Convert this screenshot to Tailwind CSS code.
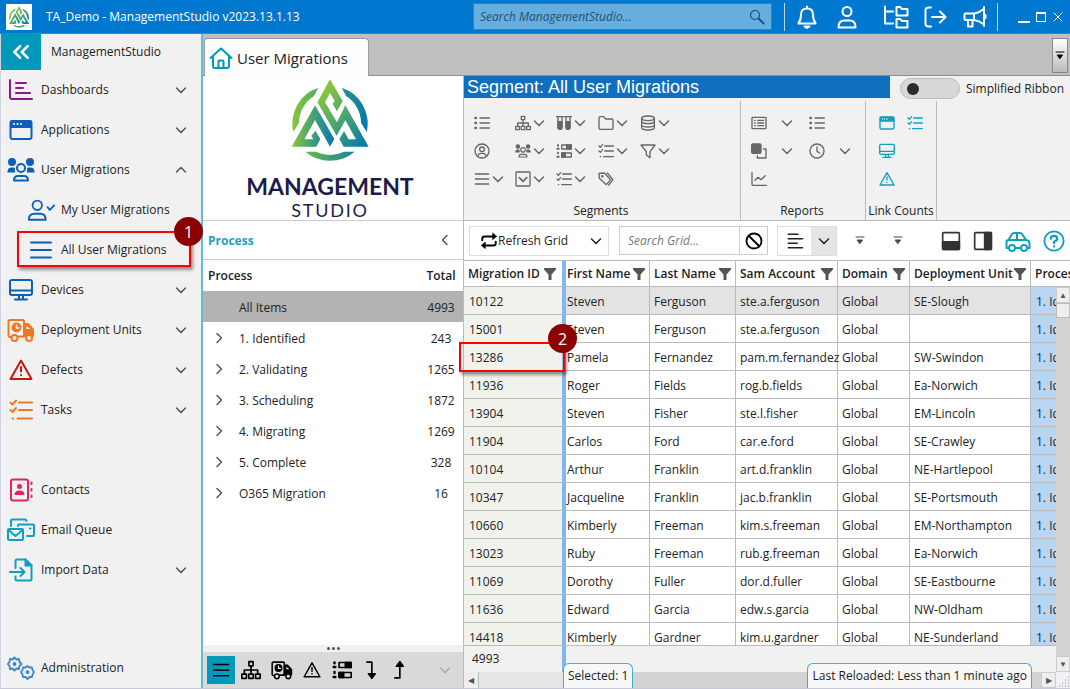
<!DOCTYPE html>
<html lang="en">
<head>
  <meta charset="UTF-8">
  <meta name="viewport" content="width=device-width, initial-scale=1.0">
  <title>TA_Demo - ManagementStudio</title>
  <script src="https://cdn.jsdelivr.net/npm/@tailwindcss/browser@4"></script>
</head>
<body class="flex h-screen flex-col overflow-hidden bg-[#f1f1f1] font-['Open_Sans','Noto_Sans',sans-serif] text-xs text-[#222] [&_svg]:fill-none [&_svg]:stroke-current [&_svg]:stroke-2 [&_svg]:[stroke-linecap:round] [&_svg]:[stroke-linejoin:round]">

  <!-- Icon sprite -->
  <svg class="absolute size-0" aria-hidden="true">
    <defs>
      <linearGradient id="grad-logo" gradientUnits="userSpaceOnUse" x1="280" y1="0" x2="500" y2="0">
        <stop offset="0" stop-color="#86c440"/><stop offset=".45" stop-color="#44a56c"/><stop offset="1" stop-color="#0779ae"/>
      </linearGradient>
      <linearGradient id="grad-left" gradientUnits="userSpaceOnUse" x1="280" y1="200" x2="400" y2="215">
        <stop offset="0" stop-color="#86c440"/><stop offset=".5" stop-color="#3f9c7c"/><stop offset="1" stop-color="#0779ae"/>
      </linearGradient>
      <linearGradient id="grad-right" gradientUnits="userSpaceOnUse" x1="360" y1="80" x2="500" y2="220">
        <stop offset="0" stop-color="#86c440"/><stop offset=".5" stop-color="#45a273"/><stop offset="1" stop-color="#0779ae"/>
      </linearGradient>
    </defs>
    <symbol id="logo" viewBox="270 25 240 250">
      <path stroke="none" fill="url(#grad-logo)" d="M355 53A113 113 0 0 0 280 186L297 158A95 95 0 0 1 342 78ZM425 53A113 113 0 0 1 500 186L483 158A95 95 0 0 0 438 78ZM316 245A113 113 0 0 0 464 245L432 245A95 95 0 0 1 348 245Z"/>
      <path stroke="none" fill="url(#grad-left)" d="M275 230L345 106L403 207L390 230L345 150L313 208H340L334 198L346 182L361 207L349 230Z"/>
      <path stroke="none" fill="url(#grad-right)" d="M390 28L428 93L411 124L398 102L404 92L390 69L375 97L411 157L436 106L506 230H431L418 207L432 183L446 208H468L436 151L410 197L352 97Z"/>
    </symbol>
    <symbol id="i-down" viewBox="0 0 12 12"><path d="M1.500 4L6 8.500L10.500 4" stroke-width="1.500"/></symbol>
    <symbol id="i-up" viewBox="0 0 12 12"><path d="M1.500 8L6 3.500L10.500 8" stroke-width="1.500"/></symbol>
    <symbol id="i-right" viewBox="0 0 12 12"><path d="M4 1.500L8.500 6L4 10.500" stroke-width="1.500"/></symbol>
    <symbol id="i-left" viewBox="0 0 12 12"><path d="M8 1.500L3.500 6L8 10.500" stroke-width="1.500"/></symbol>
    <symbol id="i-collapse" viewBox="0 0 24 24"><path d="M11 5L4 12L11 19M20 5L13 12L20 19" stroke-width="3"/></symbol>
    <symbol id="i-chart" viewBox="0 0 24 24"><path d="M1 2V19Q1 21 3 21H23M7 5H17M7 10H14M7 15H21"/></symbol>
    <symbol id="i-app" viewBox="0 0 24 24"><rect x="1.500" y="3" width="21" height="18" rx="2"/><path d="M2 3.500H22V9H2Z" fill="currentColor"/><path d="M5 6H5.100M8.500 6H8.600M12 6H12.100" stroke="#f1f1f1"/></symbol>
    <symbol id="i-users" viewBox="0 0 28 24"><circle cx="5" cy="4" r="3" fill="currentColor"/><circle cx="23" cy="4" r="3" fill="currentColor"/><circle cx="14" cy="10" r="4"/><path d="M1 13Q1 10 4 10H7.500Q7 13 8 14H1ZM27 13Q27 10 24 10H20.500Q21 13 20 14H27Z" fill="currentColor" stroke-width="1"/><path d="M7 22.500Q7 18 11 18H17Q21 18 21 22.500Z"/></symbol>
    <symbol id="i-usercheck" viewBox="0 0 30 24"><circle cx="11" cy="7" r="5"/><path d="M2 22.500Q2 16 8 16H14Q20 16 20 22.500ZM22 9L24.500 12L29 7"/></symbol>
    <symbol id="i-menu" viewBox="0 0 24 24"><path d="M2 4.500H22M2 12H22M2 19.500H22"/></symbol>
    <symbol id="i-monitor" viewBox="0 0 24 24"><rect x="1" y="2" width="22" height="15" rx="2"/><path d="M1 12.500H23M10 17V21M14 17V21M6 21.500H18"/></symbol>
    <symbol id="i-truck" viewBox="0 0 28 24"><path d="M4 19H3Q1.500 19 1.500 17.500V3.500Q1.500 2 3 2H15.500Q17 2 17 3.500V18.500H11"/><circle cx="9.500" cy="9.500" r="5" fill="currentColor" stroke="none"/><path d="M9.500 7V10H12" stroke="#f1f1f1" stroke-width="1.500"/><path d="M17 6H21L26 11.500V18H25Q22 13 18 18H17Z" fill="currentColor"/><path d="M19.500 8V11H23.500Z" fill="#f1f1f1" stroke="none"/><circle cx="7.500" cy="20" r="3" fill="#f1f1f1"/><circle cx="22" cy="20" r="3" fill="#f1f1f1"/></symbol>
    <symbol id="i-warn" viewBox="0 0 24 24"><path d="M12 2.500L22.500 21H1.500ZM12 9V13.500M12 17V17.200"/></symbol>
    <symbol id="i-tasks" viewBox="0 0 24 24"><path d="M1.500 4.500L3.500 6.500L7 2.500M1.500 12L3.500 14L7 10M3.500 20.500H4M10 4.500H23M10 12H23M8.500 20.500H23"/></symbol>
    <symbol id="i-contact" viewBox="0 0 24 24"><rect x="2" y="1.500" width="17" height="21" rx="2"/><circle cx="10.500" cy="8.500" r="2.500" fill="currentColor" stroke="none"/><path d="M5.500 17Q5.500 12.500 10.500 12.500T15.500 17Z" fill="currentColor" stroke="none"/><path d="M22.500 4.500V6M22.500 11V12.500M22.500 17.500V19"/></symbol>
    <symbol id="i-mails" viewBox="0 0 28 24"><rect x="1" y="11" width="15" height="11" rx="1"/><path d="M1.500 12L8.500 18L15.500 12M4 8V2.500Q4 1.500 5 1.500H18Q19.500 1.500 19.500 3M11 8V7.500Q11 6.500 12 6.500H26Q27 6.500 27 7.500V17Q27 18 26 18H20M23 10.500H23.500"/></symbol>
    <symbol id="i-import" viewBox="0 0 24 24"><path d="M6.500 10V3Q6.500 1.500 8 1.500H16.500L22.500 7.500V21Q22.500 22.500 21 22.500H8Q6.500 22.500 6.500 21V18.500M1 14H15M11.500 10L15.500 14L11.500 18"/><path d="M16.500 1.500V7.500H22.500Z" fill="currentColor"/></symbol>
    <symbol id="i-gears" viewBox="0 0 28 24"><g stroke-width="1.800"><path d="M7.500 1.500L9.500 3.500L12 3L12.500 6L14.500 8L12.500 10L12 13L9.500 12.500L7.500 14.500L5.500 12.500L3 13L2.500 10L.900 8L2.500 6L3 3L5.500 3.500Z"/><circle cx="7.500" cy="8" r="1"/><path d="M20.500 10L22.500 11.500L25 11.500L25.500 14L27 16L25.500 18.500L25 21L22.500 21L20.500 23L18.500 21L16 21L15.500 18.500L14 16L15.500 14L16 11.500L18.500 11.500Z"/><circle cx="20.500" cy="16.200" r="1"/></g></symbol>
    <symbol id="i-home" viewBox="0 0 24 24"><path d="M1.500 12L12 2.500L22.500 12M4 10.500V20Q4 22 6 22H18Q20 22 20 20V10.500M9.500 21V15.500Q9.500 14.500 10.500 14.500H13.500Q14.500 14.500 14.500 15.500V21"/></symbol>
    <symbol id="i-search" viewBox="0 0 16 16"><circle cx="6" cy="6" r="4.500" stroke-width="1.200"/><path d="M9.500 9.500L14.500 14.500" stroke-width="2"/></symbol>
    <symbol id="i-bell" viewBox="0 0 24 24"><path d="M12 1.500V3M3.500 18Q6 15 6 9.500Q6 3.500 12 3.500T18 9.500Q18 15 20.500 18V18.500H3.500Z"/><path d="M9.500 21.500H14.500L12 23Z" fill="currentColor"/></symbol>
    <symbol id="i-user" viewBox="0 0 24 24"><circle cx="12" cy="6.500" r="4.500"/><path d="M3.500 22.500Q3.500 15.500 9 15.500H15Q20.500 15.500 20.500 22.500Z"/></symbol>
    <symbol id="i-tree" viewBox="0 0 26 24"><path d="M2 1.500V18.500H10M2 6.500H10M13.500 2H17L19 4H24.500V10.500H13.500ZM13.500 14H17L19 16H24.500V22.500H13.500Z"/></symbol>
    <symbol id="i-logout" viewBox="0 0 24 24"><path d="M8 2.500H5.500Q2.500 2.500 2.500 5.500V18.500Q2.500 21.500 5.500 21.500H8M9 12H22M17 6.500L22.500 12L17 17.500"/></symbol>
    <symbol id="i-horn" viewBox="0 0 24 24"><path d="M2 8.500H11Q16 8 21 3.500V19.500Q16 15.500 11 15H2.500Q1.500 15 1.500 14V9.500ZM11 8.500V15M5 15V21.500H9.500V15M21 2V21M22.500 10V13"/></symbol>
    <symbol id="i-list" viewBox="0 0 24 24"><path d="M2 4.500H3M2 12H3M2 19.500H3" stroke-width="3.500"/><path d="M9 4.500H23M9 12H23M9 19.500H23"/></symbol>
    <symbol id="i-org" viewBox="0 0 24 24"><path d="M9.500 2H14.500V7H9.500ZM1 17H6.500V22H1ZM9.300 17H14.700V22H9.300ZM17.500 17H23V22H17.500ZM12 7V17M4 17V12H20V17"/></symbol>
    <symbol id="i-tubes" viewBox="0 0 24 24"><path d="M1 2.500H11M13 2.500H23M3 3V18.500Q3 21.500 6 21.500T9 18.500V3M15 3V18.500Q15 21.500 18 21.500T21 18.500V3"/><path d="M3 10H9V19Q8 21.500 6 21.500T3 19ZM15 10H21V19Q20 21.500 18 21.500T15 19Z" fill="currentColor"/></symbol>
    <symbol id="i-folder" viewBox="0 0 24 24"><path d="M1.500 4.500Q1.500 2.500 3.500 2.500H8.500L11.500 6H20.500Q22.500 6 22.500 8V19.500Q22.500 21.500 20.500 21.500H3.500Q1.500 21.500 1.500 19.500Z"/></symbol>
    <symbol id="i-db" viewBox="0 0 24 24"><ellipse cx="12" cy="5" rx="9.500" ry="3.500"/><path d="M2.500 5V19Q3 22.500 12 22.500T21.500 19V5M2.500 10Q4 13 12 13T21.500 10M2.500 15Q4 18 12 18T21.500 15"/></symbol>
    <symbol id="i-profile" viewBox="0 0 24 24"><circle cx="12" cy="12" r="10.500"/><circle cx="12" cy="9.500" r="3.500"/><path d="M6 19Q7 15.500 10 15.500H14Q17 15.500 18 19"/></symbol>
    <symbol id="i-rows" viewBox="0 0 24 24"><path d="M3 3V4M3 14.500V15.500M2 8.500H4M2 20.500H4" stroke-width="3"/><path d="M8.500 3H23V9H8.500ZM8.500 15H23V21H8.500Z"/><path d="M16 3H23V9H16ZM8.500 15H14V21H8.500Z" fill="currentColor"/></symbol>
    <symbol id="i-funnel" viewBox="0 0 24 24"><path d="M1.500 3H22.500L15 13V22L9.500 18V13Z"/></symbol>
    <symbol id="i-check" viewBox="0 0 24 24"><rect x="1.500" y="1.500" width="21" height="21" rx="1"/><path d="M6.500 10L12 15.500L17.500 10" stroke-width="2.500"/></symbol>
    <symbol id="i-tags" viewBox="0 0 24 24"><path d="M1.500 3.500L2 11L12.500 20.500L19 13L9.500 3ZM14 3L22.500 13L16 21"/><circle cx="6.500" cy="8" r="1"/></symbol>
    <symbol id="i-report" viewBox="0 0 24 24"><rect x="1.500" y="3.500" width="21" height="17" rx="1"/><path d="M5.500 8H6.500M5.500 12H6.500M5.500 16H6.500M10 8H19M10 12H19M10 16H19"/></symbol>
    <symbol id="i-copy" viewBox="0 0 24 24"><rect x="1" y="1.500" width="14" height="14" rx="2" fill="currentColor"/><path d="M19 9H22.500V22.500H9.500V19"/></symbol>
    <symbol id="i-clock" viewBox="0 0 24 24"><circle cx="12" cy="12" r="10.500"/><path d="M12 6V12.500L16 15"/></symbol>
    <symbol id="i-trend" viewBox="0 0 24 24"><path d="M1.500 2.500V20Q1.500 21.500 3 21.500H23M6 14L10.500 9.500L15 13L21.500 7"/></symbol>
    <symbol id="i-refresh" viewBox="0 0 24 24"><path d="M3 11V9Q3 6 6 6H19M5 18H18Q21 18 21 15V13" stroke-width="2.500"/><path d="M17 2V10L22 6ZM7 14V22L2 18Z" fill="currentColor" stroke-width="1"/></symbol>
    <symbol id="i-ban" viewBox="0 0 24 24"><circle cx="12" cy="12" r="10" stroke-width="2.500"/><path d="M5 5L19 19" stroke-width="2.500"/></symbol>
    <symbol id="i-align" viewBox="0 0 24 24"><path d="M3 3H16M3 9H22M3 15H15M3 21H22"/></symbol>
    <symbol id="i-pbottom" viewBox="0 0 24 24"><rect x="2" y="2" width="20" height="20" rx="1"/><path d="M2 13H22V22H2Z" fill="currentColor"/></symbol>
    <symbol id="i-pright" viewBox="0 0 24 24"><rect x="2" y="2" width="20" height="20" rx="1"/><path d="M14 2H22V22H14Z" fill="currentColor"/></symbol>
    <symbol id="i-car" viewBox="0 0 26 24"><path d="M4 19H1.500V13Q1.500 11 3.500 11L7 5Q7.500 4 9 4H15Q16 4 17 5L21 11Q24.500 11.500 24.500 14V19H22M10 19H16M3.500 11H21M12 4V11"/><circle cx="7" cy="19" r="3"/><circle cx="19" cy="19" r="3"/></symbol>
    <symbol id="i-help" viewBox="0 0 24 24"><circle cx="12" cy="12" r="10.500"/><path d="M8.500 9.500Q8.500 6.500 12 6.500T15.500 9.500Q15.500 11.500 12 13V14.500M12 18V18.100" stroke-width="2.500"/></symbol>
    <symbol id="i-enddown" viewBox="0 0 24 24"><path d="M7 2.500H13V19"/><path d="M9 16.500H17L13 22Z" fill="currentColor"/></symbol>
    <symbol id="i-endup" viewBox="0 0 24 24"><path d="M7 21.500H13V5"/><path d="M9 7.500H17L13 2Z" fill="currentColor"/></symbol>
    <symbol id="i-filter" viewBox="0 0 12 12"><path d="M0 0H12V1.500L7.500 6.500V12H4.500V6.500L0 1.500Z" fill="#555" stroke="none"/></symbol>
    <symbol id="i-overflow" viewBox="0 0 10 10"><path d="M1 1H9M2.500 4H7.500L5 7.500Z" fill="currentColor" stroke-width="1"/></symbol>
  </svg>

  <!-- Title bar -->
  <header class="flex h-[34px] shrink-0 items-center border-b border-[#1795c0] bg-[#0078d0] text-white">
    <span class="ml-1.5 bg-white"><svg class="size-[26px] p-0.5"><use href="#logo"/></svg></span>
    <h1 class="ml-3.5 flex-1">TA_Demo - ManagementStudio v2023.13.1.13</h1>
    <label class="flex h-[27px] w-[299px] items-center border border-[#2384cc] bg-[#66ade0] px-1.5 text-[#1f4e79]">
      <input type="text" aria-label="Search ManagementStudio" placeholder="Search ManagementStudio..." class="min-w-0 flex-1 italic outline-none placeholder:text-[#27506f]">
      <svg class="size-4"><use href="#i-search"/></svg>
    </label>
    <div class="ml-3 flex h-7 items-center border-x border-[#b5d8f2] pr-2.5 pl-2.5">
      <button aria-label="Notifications"><svg class="size-6"><use href="#i-bell"/></svg></button>
      <button aria-label="Account" class="ml-4"><svg class="size-6"><use href="#i-user"/></svg></button>
      <button aria-label="Folders" class="ml-6"><svg class="h-6 w-[26px]"><use href="#i-tree"/></svg></button>
      <button aria-label="Log out" class="ml-3.5"><svg class="size-6"><use href="#i-logout"/></svg></button>
      <button aria-label="Announcements" class="ml-4"><svg class="size-6"><use href="#i-horn"/></svg></button>
    </div>
    <div class="mr-1.5 ml-5 flex items-center gap-1.5">
      <button aria-label="Minimize" class="h-3 w-3 border-b-2 border-white"></button>
      <button aria-label="Maximize" class="size-2.5 border border-t-2 border-white"></button>
      <button aria-label="Close"><svg class="size-3" viewBox="0 0 12 12"><path d="M2 2L10 10M10 2L2 10" stroke-width="1"/></svg></button>
    </div>
  </header>

  <div class="flex min-h-0 flex-1 border-b border-[#c9c9dc]">

    <!-- Sidebar -->
    <nav class="flex w-[203px] shrink-0 flex-col border-r-2 border-l border-r-[#62bcd2] border-l-[#d0d2e2]">
      <div class="flex h-9 items-center">
        <button aria-label="Collapse menu" class="flex h-9 w-10 items-center justify-center bg-[#0099bc] text-white"><svg class="size-5"><use href="#i-collapse"/></svg></button>
        <span class="ml-2.5">ManagementStudio</span>
      </div>
      <ul id="menu"></ul>
      <ul id="menu-tools" class="mt-10"></ul>
      <ul id="menu-admin" class="mt-auto"></ul>
    </nav>

    <div class="flex min-w-0 flex-1 flex-col">

      <!-- Tabs -->
      <div class="flex h-[42px] shrink-0 items-end justify-between border-b border-[#8f8f8f] bg-[#bfbfbf]">
        <a href="#" class="-mb-px ml-px flex h-[38px] w-[165px] items-center rounded-t border border-b-0 border-[#999] bg-[#fdfdfd] pl-1 text-[15px]">
          <svg class="mr-1 size-6 text-[#0099bc]"><use href="#i-home"/></svg>User Migrations
        </a>
        <button aria-label="Tab list" class="mr-0.5 mb-0.5 flex h-[35px] w-4 items-center justify-center border border-[#888] bg-linear-to-b from-white to-[#bbb] text-black"><svg class="size-2.5"><use href="#i-overflow"/></svg></button>
      </div>

      <div class="flex min-h-0 flex-1">

        <!-- Process panel -->
        <section class="flex w-[260px] shrink-0 flex-col bg-white">
          <div class="flex h-[145px] shrink-0 flex-col items-center border-b border-[#ccc] pt-0.5 pr-1.5 font-['Lato',sans-serif] text-[#1c1c48]">
            <svg class="h-[84px] w-20"><use href="#logo"/></svg>
            <span class="mt-2.5 text-[23px] leading-7 font-bold">MANAGEMENT</span>
            <span class="text-lg leading-5 tracking-widest">STUDIO</span>
          </div>
          <div class="flex h-[39px] shrink-0 items-center justify-between border-b border-[#ccc] pr-3 pl-[5px]">
            <h2 class="pt-0.5 font-bold text-[#1ba1c0]">Process</h2>
            <button aria-label="Collapse panel" class="text-[#555]"><svg class="size-3"><use href="#i-left"/></svg></button>
          </div>
          <table class="w-full table-fixed">
            <colgroup><col class="w-9"><col><col class="w-11"></colgroup>
            <thead>
              <tr class="h-[31px] text-left">
                <th colspan="2" class="pl-[5px] font-semibold">Process</th>
                <th class="text-center font-semibold">Total</th>
              </tr>
            </thead>
            <tbody id="process-rows"></tbody>
          </table>
          <div class="mt-auto flex h-[7px] items-center justify-center gap-0.5 bg-[#f1f1f1]">
            <i class="size-[3px] rounded-full bg-[#555]"></i><i class="size-[3px] rounded-full bg-[#555]"></i><i class="size-[3px] rounded-full bg-[#555]"></i>
          </div>
          <div class="flex h-9 shrink-0 items-center bg-[#d9d9d9] pl-1 text-black">
            <button aria-label="Process" class="flex size-7 items-center justify-center bg-[#0099bc]"><svg class="size-[18px]"><use href="#i-menu"/></svg></button>
            <button aria-label="Structure" class="ml-1.5"><svg class="size-5"><use href="#i-org"/></svg></button>
            <button aria-label="Deployment Units" class="ml-2.5"><svg class="h-5 w-[22px]"><use href="#i-truck"/></svg></button>
            <button aria-label="Defects" class="ml-2.5"><svg class="size-[18px]"><use href="#i-warn"/></svg></button>
            <button aria-label="Forms" class="ml-2.5"><svg class="h-5 w-[22px]"><use href="#i-rows"/></svg></button>
            <button aria-label="Move down" class="ml-2"><svg class="size-5"><use href="#i-enddown"/></svg></button>
            <button aria-label="Move up" class="ml-2"><svg class="size-5"><use href="#i-endup"/></svg></button>
            <button aria-label="More" class="mr-3 ml-auto text-[#aaa]"><svg class="size-3"><use href="#i-down"/></svg></button>
          </div>
        </section>

        <!-- Grid -->
        <section class="flex min-w-0 flex-1 flex-col border-l border-[#bbb]">
          <div class="flex h-[145px] shrink-0 flex-col border-b border-[#bbb]">
            <div class="flex h-[25px] items-start">
              <h2 class="h-[22px] flex-1 bg-[#106ebe] pl-[3px] font-['Liberation_Sans',Arial,sans-serif] text-lg leading-[22px] text-white">Segment: All User Migrations</h2>
              <label class="ml-2.5 flex items-center pt-0.5 pr-1.5">
                <input type="checkbox" class="peer sr-only">
                <span class="mr-1.5 flex h-[21px] w-[60px] items-center rounded-full border border-[#bbb] bg-[#d8d8d8] pl-1.5"><i class="size-3 rounded-full bg-[#2b2b2b]"></i></span>
                Simplified Ribbon
              </label>
            </div>
            <div class="flex flex-1 text-[#666]">
              <div class="flex w-[277px] flex-col border-r border-[#bbb] pt-2 pl-2.5">
                <div id="segments" class="grid auto-rows-[28px] grid-cols-[41px_41px_42px_42px_42px] items-center"></div>
                <p class="mt-auto pr-3 pb-px text-center text-[#222]">Segments</p>
              </div>
              <div class="flex w-[125px] flex-col border-r border-[#bbb] pt-2 pl-2.5">
                <div id="reports" class="grid auto-rows-[28px] grid-cols-[58px_58px] items-center"></div>
                <p class="mt-auto pr-3 pb-px text-center text-[#222]">Reports</p>
              </div>
              <div class="flex w-[71px] flex-col border-r border-[#bbb] pt-2">
                <div id="links" class="grid auto-rows-[28px] grid-cols-[28px_28px] items-center pl-[13px] text-[#0fa0c0]"></div>
                <p class="mt-auto pb-px text-center whitespace-nowrap text-[#222]">Link Counts</p>
              </div>
            </div>
          </div>

          <div class="flex h-10 shrink-0 items-center border-b border-[#bbb] bg-white px-[5px]">
            <button class="flex h-[30px] w-[140px] items-center border border-[#ddd] pr-1.5 pl-2.5"><svg class="size-[18px] text-black"><use href="#i-refresh"/></svg>Refresh Grid<svg class="ml-auto size-3"><use href="#i-down"/></svg></button>
            <div class="ml-2.5 flex h-[29px] w-[149px] border border-[#ccc]">
              <input type="text" aria-label="Search Grid" placeholder="Search Grid..." class="min-w-0 flex-1 pl-2 italic outline-none placeholder:text-[#777]">
              <button aria-label="Clear search" class="flex w-7 items-center justify-center border-l border-[#ccc] text-black"><svg class="size-[18px]"><use href="#i-ban"/></svg></button>
            </div>
            <div class="ml-[9px] flex h-[30px] w-[60px] border border-[#ddd]">
              <button aria-label="Align" class="flex flex-1 items-center justify-center"><svg class="size-[18px]"><use href="#i-align"/></svg></button>
              <button aria-label="Align options" class="flex w-[25px] items-center justify-center bg-[#e5e5e5]"><svg class="size-3"><use href="#i-down"/></svg></button>
            </div>
            <button aria-label="Toolbar options" class="ml-[18px] text-[#444]"><svg class="size-2.5"><use href="#i-overflow"/></svg></button>
            <button aria-label="Toolbar options" class="ml-7 text-[#444]"><svg class="size-2.5"><use href="#i-overflow"/></svg></button>
            <div class="ml-auto flex items-center gap-3 text-[#333]">
              <button aria-label="Bottom panel"><svg class="size-5"><use href="#i-pbottom"/></svg></button>
              <button aria-label="Right panel"><svg class="size-5"><use href="#i-pright"/></svg></button>
              <button aria-label="Ride along" class="text-[#0fa0c0]"><svg class="h-6 w-[26px]"><use href="#i-car"/></svg></button>
              <button aria-label="Help" class="text-[#0fa0c0]"><svg class="size-[22px]"><use href="#i-help"/></svg></button>
            </div>
          </div>

          <div class="relative flex min-h-0 flex-1 flex-col">
            <div class="min-h-0 flex-1 overflow-hidden border-b border-[#bbb]">
              <table class="w-[660px] min-w-full table-fixed border-separate border-spacing-0">
                <colgroup>
                  <col class="w-[102px]"><col class="w-[84px]"><col class="w-[86px]"><col class="w-[102px]"><col class="w-[72px]"><col class="w-[121px]"><col>
                </colgroup>
                <thead><tr id="grid-head" class="h-[26px] bg-white text-left"></tr></thead>
                <tbody id="grid-rows"></tbody>
              </table>
            </div>
            <div class="flex h-[26px] shrink-0"><div class="flex w-[102px] items-center border-r-4 border-[#7fb8ee] pl-2">4993</div></div>
            <div class="flex h-4 shrink-0 bg-[#d3d3d3]">
              <button aria-label="Scroll left" class="w-[15px] border-r border-[#bbb] bg-[#eee] text-[8px] leading-4 text-[#555]">◀</button>
              <div class="w-[154px] bg-[#e5e5e5]"></div>
              <button aria-label="Scroll right" class="ml-auto w-[15px] border border-[#ccc] bg-[#eee] text-[8px] text-[#555]">▶</button>
              <svg class="h-4 w-[14px] bg-[#f1f1f1]" viewBox="0 0 14 16"><path d="M12 5H13M9 8H10M12 8H13M6 11H7M9 11H10M12 11H13M3 14H4M6 14H7M9 14H10M12 14H13" stroke="#b9bfd0" stroke-linecap="butt"/></svg>
            </div>

            <!-- Vertical scrollbar -->
            <div class="absolute top-[26px] right-0 bottom-4 flex w-[14px] flex-col bg-[#d3d3d3]">
              <button aria-label="Scroll up" class="h-4 w-full border border-[#ccc] bg-[#eee] text-[8px] leading-3 text-[#555]">▲</button>
              <div class="h-[15px] border border-[#bbb] bg-[#eee]"></div>
              <button aria-label="Scroll down" class="mt-auto h-4 w-full border border-[#ccc] bg-[#eee] text-[8px] leading-3 text-[#555]">▼</button>
            </div>

            <!-- Status flyouts -->
            <p class="absolute bottom-0 left-[99px] h-[25px] rounded-t-md border border-b-0 border-[#45aec9] bg-[#f8f8f8] px-1 leading-6">Selected: 1</p>
            <p class="absolute right-[38px] bottom-0 h-[25px] rounded-t-md border border-b-0 border-[#45aec9] bg-[#f8f8f8] px-1 leading-6">Last Reloaded: Less than 1 minute ago</p>

            <!-- Step 2 marker -->
            <div class="absolute top-[81px] left-[-5px] h-[30px] w-[106px] border-2 border-[#f00] shadow-[2px_3px_3px_rgba(0,0,0,0.4)]">
              <span class="absolute -top-5 -right-3.5 flex size-[29px] items-center justify-center rounded-full bg-[#8b0000] text-base text-white">2</span>
            </div>
          </div>
        </section>
      </div>
    </div>
  </div>

  <script>
    const menu = [
      ["i-chart", "text-[#8a1a8c]", "Dashboards", "i-down"],
      ["i-app", "text-[#0f5fb8]", "Applications", "i-down"],
      ["i-users", "text-[#0f5fb8]", "User Migrations", "i-up"],
      ["i-usercheck", "text-[#0f5fb8]", "My User Migrations", "", "sub"],
      ["i-menu", "text-[#0f5fb8]", "All User Migrations", "", "sub", "1"],
      ["i-monitor", "text-[#0f5fb8]", "Devices", "i-down"],
      ["i-truck", "text-[#f07820]", "Deployment Units", "i-down"],
      ["i-warn", "text-[#c81414]", "Defects", "i-down"],
      ["i-tasks", "text-[#f07820]", "Tasks", "i-down"]
    ];
    const tools = [
      ["i-contact", "text-[#e0245e]", "Contacts"],
      ["i-mails", "text-[#0fa0c0]", "Email Queue"],
      ["i-import", "text-[#0fa0c0]", "Import Data", "i-down"]
    ];
    const admin = [["i-gears", "text-[#3c87cc]", "Administration"]];

    const marker = n => `
      <span class="absolute top-px right-2.5 left-4 h-9 border-2 border-[#f00] shadow-[2px_3px_3px_rgba(0,0,0,0.4)]">
        <span class="absolute -top-4 -right-3.5 z-10 flex size-[29px] items-center justify-center rounded-full bg-[#8b0000] text-base text-white">${n}</span>
      </span>`;

    const menuItem = ([icon, color, text, arrow, sub, mark]) => `
      <li class="relative">
        <a href="#" class="flex h-10 items-center pr-3.5 ${sub ? "pl-[26px]" : "pl-1.5"}">
          <svg class="mr-1.5 h-6 w-7 ${color}"><use href="#${icon}"/></svg>${text}
          ${arrow ? `<svg class="ml-auto size-3 text-[#555]"><use href="#${arrow}"/></svg>` : ""}
        </a>
        ${mark ? marker(mark) : ""}
      </li>`;

    document.getElementById("menu").innerHTML = menu.map(menuItem).join("");
    document.getElementById("menu-tools").innerHTML = tools.map(menuItem).join("");
    document.getElementById("menu-admin").innerHTML = admin.map(menuItem).join("");

    const process = [
      ["All Items", 4993], ["1. Identified", 243], ["2. Validating", 1265], ["3. Scheduling", 1872],
      ["4. Migrating", 1269], ["5. Complete", 328], ["O365 Migration", 16]
    ];
    document.getElementById("process-rows").innerHTML = process.map(([name, total], i) => `
      <tr class="h-[31px] ${i ? "" : "bg-[#b3b3b3]"}">
        <td class="pl-2.5 text-[#555]">${i ? `<svg class="size-3"><use href="#i-right"/></svg>` : ""}</td>
        <td class="pt-0.5">${name}</td>
        <td class="pt-0.5 text-center">${total}</td>
      </tr>`).join("");

    // Ribbon buttons: [icon, label, has drop-down]
    const ribbon = (id, gap, items) => {
      document.getElementById(id).innerHTML = items.map(item => item ? `
        <button aria-label="${item[1]}" class="flex items-center ${gap}">
          <svg class="size-4"><use href="#${item[0]}"/></svg>
          ${item[2] ? `<svg class="size-3"><use href="#i-down"/></svg>` : ""}
        </button>` : "<span></span>").join("");
    };
    ribbon("segments", "gap-0.5", [
      ["i-list", "List"], ["i-org", "Structure", 1], ["i-tubes", "Tests", 1], ["i-folder", "Folders", 1], ["i-db", "Data", 1],
      ["i-profile", "Profile"], ["i-users", "Users", 1], ["i-rows", "Forms", 1], ["i-tasks", "Tasks", 1], ["i-funnel", "Filter", 1],
      ["i-menu", "Rows", 1], ["i-check", "Select", 1], ["i-tasks", "Checklist", 1], ["i-tags", "Tags"]
    ]);
    ribbon("reports", "gap-3.5", [
      ["i-report", "Report", 1], ["i-list", "List"],
      ["i-copy", "Copy", 1], ["i-clock", "History", 1],
      ["i-trend", "Trend"]
    ]);
    ribbon("links", "gap-0", [
      ["i-app", "Applications"], ["i-tasks", "Tasks"], ["i-monitor", "Devices"], null, ["i-warn", "Defects"]
    ]);

    const columns = ["Migration ID", "First Name", "Last Name", "Sam Account", "Domain", "Deployment Unit", "Process"];
    document.getElementById("grid-head").innerHTML = columns.map((name, i) => `
      <th class="border-b border-[#bbb] py-0 font-semibold whitespace-nowrap ${i ? "border-r pr-1" : "border-r-4 border-r-[#7fb8ee] pr-1.5"} ${i === 1 ? "pl-px" : "pl-1"}">
        <span class="flex items-center justify-between">${name}<svg class="size-3"><use href="#i-filter"/></svg></span>
      </th>`).join("");

    const people = [
      [10122, "Steven", "Ferguson", "ste.a.ferguson", "SE-Slough"],
      [15001, "Steven", "Ferguson", "ste.a.ferguson", ""],
      [13286, "Pamela", "Fernandez", "pam.m.fernandez", "SW-Swindon"],
      [11936, "Roger", "Fields", "rog.b.fields", "Ea-Norwich"],
      [13904, "Steven", "Fisher", "ste.l.fisher", "EM-Lincoln"],
      [11904, "Carlos", "Ford", "car.e.ford", "SE-Crawley"],
      [10104, "Arthur", "Franklin", "art.d.franklin", "NE-Hartlepool"],
      [10347, "Jacqueline", "Franklin", "jac.b.franklin", "SE-Portsmouth"],
      [10660, "Kimberly", "Freeman", "kim.s.freeman", "EM-Northampton"],
      [13023, "Ruby", "Freeman", "rub.g.freeman", "Ea-Norwich"],
      [11069, "Dorothy", "Fuller", "dor.d.fuller", "SE-Eastbourne"],
      [11636, "Edward", "Garcia", "edw.s.garcia", "NW-Oldham"],
      [14418, "Kimberly", "Gardner", "kim.u.gardner", "NE-Sunderland"]
    ];
    document.getElementById("grid-rows").innerHTML = people.map(([id, first, last, sam, unit], i) => {
      const cell = "border-r border-b border-[#bbb] pt-0.5 pl-1";
      return `
      <tr class="h-7 whitespace-nowrap ${i ? "bg-white" : "bg-[#e3e3e3]"}">
        <td class="border-r-4 border-b border-[#bbb] border-r-[#7fb8ee] bg-[#f1f2ec] pt-0.5 pl-[5px]">${id}</td>
        <td class="border-r border-b border-[#bbb] pt-0.5 pl-px">${first}</td>
        <td class="${cell}">${last}</td>
        <td class="${cell}">${sam}</td>
        <td class="${cell}">Global</td>
        <td class="${cell}">${unit}</td>
        <td class="border-b border-[#bbb] bg-[#b9d5f1] pt-0.5 pl-[5px]">1. Identified</td>
      </tr>`;
    }).join("");
  </script>
</body>
</html>
